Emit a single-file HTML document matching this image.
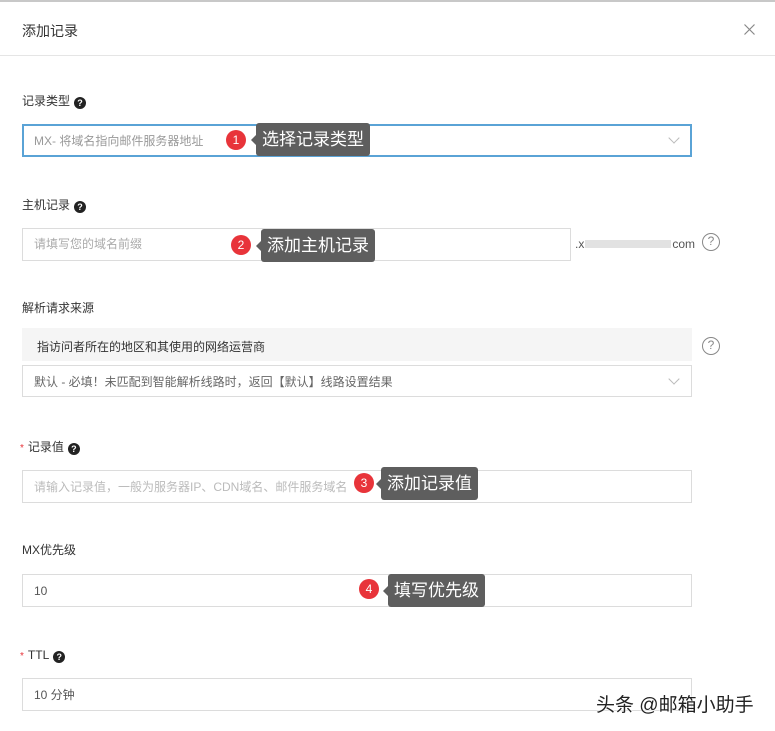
<!DOCTYPE html>
<html><head><meta charset="utf-8"><style>
*{margin:0;padding:0;box-sizing:border-box}
body{width:775px;height:731px;background:#fff;position:relative;overflow:hidden;font-family:"Liberation Sans","Noto Sans CJK SC",sans-serif;color:#333;font-size:12px}
.a{position:absolute;white-space:nowrap}
.box{position:absolute;border:1px solid #dcdcdc;background:#fff;height:33px}
.lbl{position:absolute;font-size:12px;color:#333;line-height:14px}
.q{display:inline-block;width:12px;height:12px;border-radius:50%;background:#222;color:#fff;font-size:9px;line-height:12px;text-align:center;vertical-align:-1px;margin-left:4px;font-weight:bold}
.ph{position:absolute;color:#aaa;font-size:12px;line-height:14px}
.b{position:absolute;width:20px;height:20px;border-radius:50%;background:#e8343a;color:#fff;font-size:12px;line-height:20px;text-align:center}
.t{position:absolute;background:#5e5e5e;color:#fff;font-size:17px;height:33px;line-height:33px;padding:0 6px;border-radius:3px}
.t:before{content:"";position:absolute;left:-5px;top:12px;border-top:5px solid transparent;border-bottom:5px solid transparent;border-right:5px solid #5e5e5e}
.star{color:#e8343a;font-size:10px;margin-right:4px}
.qc{position:absolute;width:18px;height:18px;border:1.5px solid #888;border-radius:50%;color:#888;font-size:12px;line-height:15px;text-align:center}
.chev{position:absolute;width:8px;height:8px;border-right:1px solid #bbb;border-bottom:1px solid #bbb;transform:rotate(45deg)}
</style></head><body>
<div class="a" style="left:0;top:0;width:775px;height:2px;background:#c8c8c8"></div>
<div class="a" style="left:22px;top:21px;font-size:14px;color:#333">添加记录</div>
<svg class="a" style="left:744px;top:24px" width="11" height="11" viewBox="0 0 11 11"><path d="M0.5 0.5L10.5 10.5M10.5 0.5L0.5 10.5" stroke="#888" stroke-width="1.2"/></svg>
<div class="a" style="left:0;top:55px;width:775px;height:1px;background:#e5e5e5"></div>

<div class="lbl" style="left:22px;top:94px">记录类型<span class="q">?</span></div>
<div class="box" style="left:22px;top:124px;width:670px;border:2px solid #5aa3d6"></div>
<div class="ph" style="left:34px;top:134px;color:#999">MX- 将域名指向邮件服务器地址</div>
<div class="chev" style="left:670px;top:134px"></div>
<div class="b" style="left:226px;top:130px">1</div>
<div class="t" style="left:256px;top:123px">选择记录类型</div>

<div class="lbl" style="left:22px;top:198px">主机记录<span class="q">?</span></div>
<div class="box" style="left:22px;top:228px;width:549px"></div>
<div class="ph" style="left:34px;top:237px">请填写您的域名前缀</div>
<div class="b" style="left:231px;top:235px">2</div>
<div class="t" style="left:261px;top:229px">添加主机记录</div>
<div class="a" style="left:575px;top:237px;font-size:12px;color:#555">.x<span style="display:inline-block;width:86px;height:8px;background:#e2e2e2;margin:0 1px"></span>com</div>
<div class="qc" style="left:702px;top:233px">?</div>

<div class="lbl" style="left:22px;top:301px">解析请求来源</div>
<div class="a" style="left:22px;top:328px;width:670px;height:33px;background:#f5f5f5"></div>
<div class="a" style="left:37px;top:338px;font-size:12px;color:#333">指访问者所在的地区和其使用的网络运营商</div>
<div class="qc" style="left:702px;top:337px">?</div>
<div class="box" style="left:22px;top:365px;width:670px;height:32px"></div>
<div class="ph" style="left:34px;top:375px;color:#666">默认 - 必填！未匹配到智能解析线路时，返回【默认】线路设置结果</div>
<div class="chev" style="left:670px;top:375px"></div>

<div class="lbl" style="left:20px;top:440px"><span class="star">*</span>记录值<span class="q">?</span></div>
<div class="box" style="left:22px;top:470px;width:670px"></div>
<div class="ph" style="left:34px;top:480px;color:#bbb">请输入记录值，一般为服务器IP、CDN域名、邮件服务域名</div>
<div class="b" style="left:354px;top:473px">3</div>
<div class="t" style="left:381px;top:467px">添加记录值</div>

<div class="lbl" style="left:22px;top:543px">MX优先级</div>
<div class="box" style="left:22px;top:574px;width:670px"></div>
<div class="ph" style="left:34px;top:584px;color:#555">10</div>
<div class="b" style="left:359px;top:579px">4</div>
<div class="t" style="left:388px;top:574px">填写优先级</div>

<div class="lbl" style="left:20px;top:648px"><span class="star">*</span>TTL<span class="q">?</span></div>
<div class="box" style="left:22px;top:678px;width:670px"></div>
<div class="ph" style="left:34px;top:688px;color:#555">10 分钟</div>
<div class="a" style="left:596px;top:690px;font-size:19px;color:#222;text-shadow:0 0 2px #fff,0 0 2px #fff">头条 @邮箱小助手</div>
</body></html>
